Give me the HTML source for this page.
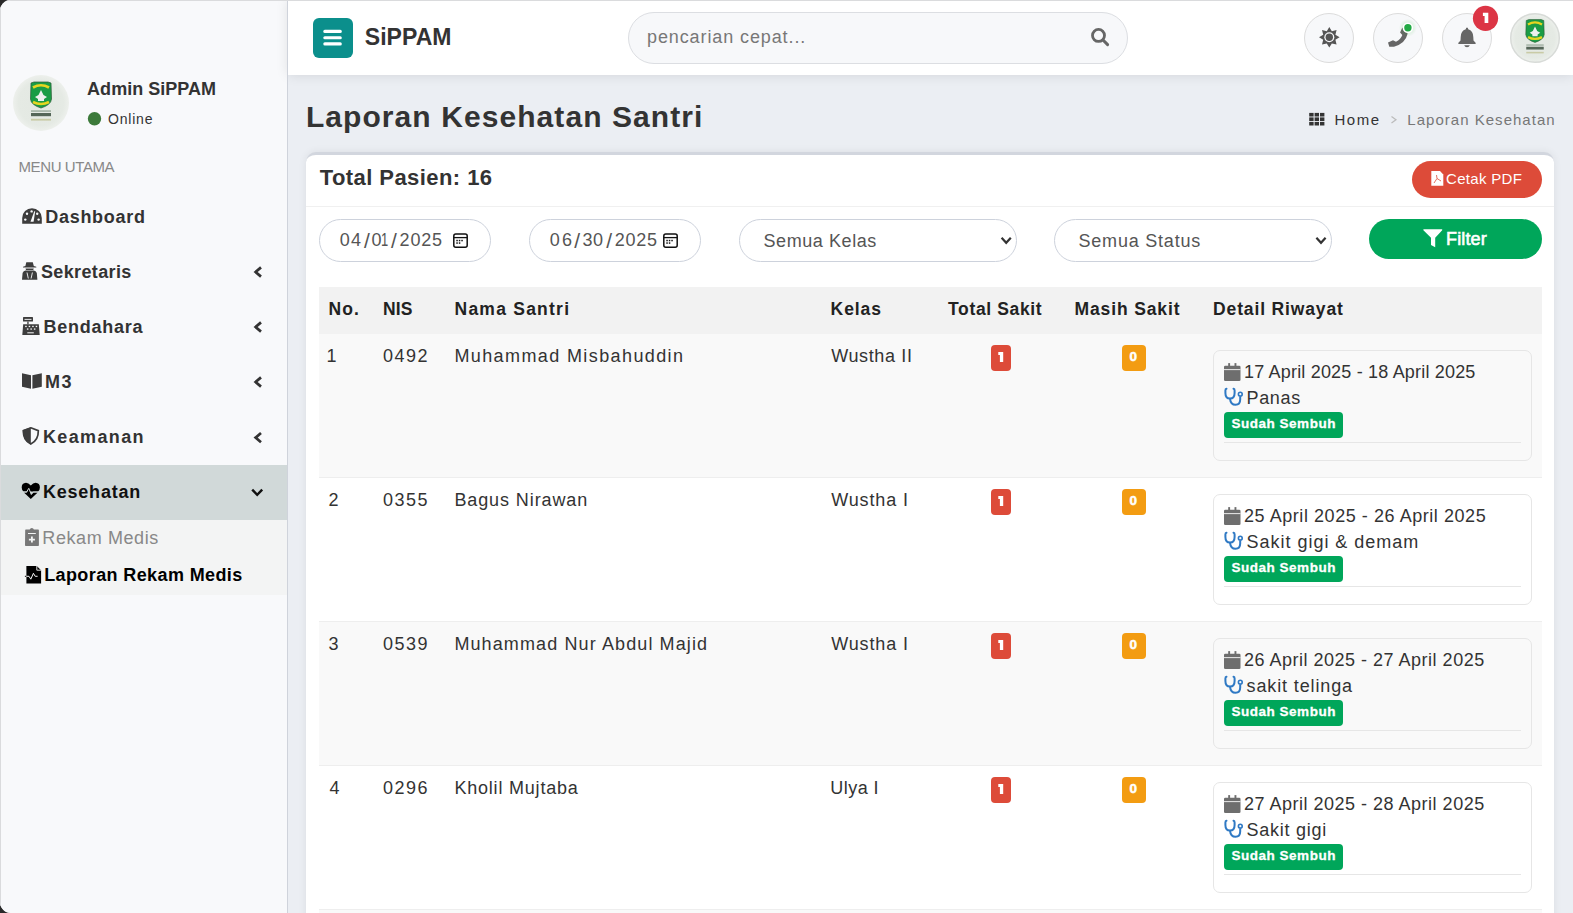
<!DOCTYPE html>
<html><head><meta charset="utf-8"><title>Laporan Kesehatan Santri</title>
<style>
*{box-sizing:border-box;margin:0;padding:0}
html,body{width:1573px;height:913px;overflow:hidden;background:#2a2a2a;font-family:"Liberation Sans",sans-serif;color:#333}
.a{position:absolute}
.t{position:absolute;white-space:nowrap;line-height:1;z-index:20}
#frame{position:absolute;left:0;top:0;width:1573px;height:913px;overflow:hidden;background:#ebeef3;border-top-left-radius:11px;border-bottom-left-radius:11px}
#side{position:absolute;left:0;top:0;width:287px;height:913px;background:#f8f9fb}
#sline{position:absolute;left:287px;top:0;width:1px;height:913px;background:#cfd3db;z-index:3}
#hdr{position:absolute;left:288px;top:0;width:1285px;height:75px;background:#fff;box-shadow:0 0 12px rgba(0,0,0,.11);z-index:2}
.circ{position:absolute;z-index:3;top:13px;width:50px;height:50px;border-radius:50%;background:#f7f8fa;border:1px solid #dcdcdc}
.card{position:absolute;left:306px;top:152px;width:1248px;height:800px;background:#fff;border-radius:10px;border-top:3px solid #d2d6de;box-shadow:0 0 8px rgba(0,0,0,.07)}
.inp{position:absolute;top:219px;height:43px;border:1px solid #cdd2dc;border-radius:22px;background:#fff}
.row{position:absolute;left:319px;width:1223px;height:144px;border-bottom:1px solid #eeeeee}
.det{position:absolute;left:1213px;width:319px;height:111px;border:1px solid #e6e6e6;border-radius:7px}
.badge{position:absolute;height:26px;border-radius:4px}
.ssb{position:absolute;left:1224px;width:119px;height:26px;background:#00a65a;border-radius:4px}
.hr{position:absolute;left:1224px;width:297px;height:1px;background:#e6e6e6}
svg{position:absolute;left:0;top:0;z-index:10}
</style></head><body>
<div id="frame">
<div id="side"></div><div id="sline"></div>
<div class="a" style="left:0;top:465px;width:287px;height:55px;background:#d1d9d9"></div>
<div class="a" style="left:0;top:520px;width:287px;height:75px;background:#f3f4f4"></div>
<div id="hdr"></div>
<div class="a" style="z-index:3;left:313px;top:18px;width:40px;height:40px;border-radius:6px;background:#0b8f8c"></div>
<div class="a" style="z-index:3;left:628px;top:12px;width:500px;height:52px;border-radius:26px;background:#f7f8fa;border:1px solid #dcdee2"></div>
<div class="circ" style="left:1304px"></div>
<div class="circ" style="left:1373px"></div>
<div class="circ" style="left:1442px"></div>
<div class="card"></div>
<div class="a" style="left:1412px;top:161px;width:130px;height:37px;border-radius:19px;background:#dd4b39"></div>
<div class="a" style="left:306px;top:206px;width:1248px;height:1px;background:#f0f0f0"></div>
<div class="inp" style="left:319px;width:172px"></div>
<div class="inp" style="left:529px;width:172px"></div>
<div class="inp" style="left:739px;width:278px"></div>
<div class="inp" style="left:1054px;width:278px"></div>
<div class="a" style="left:1369px;top:219px;width:173px;height:40px;border-radius:20px;background:#00a65a"></div>
<div class="a" style="left:319px;top:287px;width:1223px;height:47px;background:#f2f2f2"></div>
<div class="row" style="top:334px;background:#f9f9f9"></div>
<div class="row" style="top:478px;background:#fff"></div>
<div class="row" style="top:622px;background:#f9f9f9"></div>
<div class="row" style="top:766px;background:#fff"></div>
<div class="row" style="top:910px;background:#f9f9f9"></div>
<div class="badge" style="left:991px;top:345.0px;width:20px;background:#dd4b39"></div>
<div class="badge" style="left:1122px;top:345.0px;width:24px;background:#f39c12"></div>
<div class="det" style="top:350.0px"></div>
<div class="ssb" style="top:412.0px"></div>
<div class="hr" style="top:442.0px"></div>
<div class="badge" style="left:991px;top:489.0px;width:20px;background:#dd4b39"></div>
<div class="badge" style="left:1122px;top:489.0px;width:24px;background:#f39c12"></div>
<div class="det" style="top:494.0px"></div>
<div class="ssb" style="top:556.0px"></div>
<div class="hr" style="top:586.0px"></div>
<div class="badge" style="left:991px;top:633.0px;width:20px;background:#dd4b39"></div>
<div class="badge" style="left:1122px;top:633.0px;width:24px;background:#f39c12"></div>
<div class="det" style="top:638.0px"></div>
<div class="ssb" style="top:700.0px"></div>
<div class="hr" style="top:730.0px"></div>
<div class="badge" style="left:991px;top:777.0px;width:20px;background:#dd4b39"></div>
<div class="badge" style="left:1122px;top:777.0px;width:24px;background:#f39c12"></div>
<div class="det" style="top:782.0px"></div>
<div class="ssb" style="top:844.0px"></div>
<div class="hr" style="top:874.0px"></div>
<div class="a" style="left:0;top:0;width:1573px;height:1px;background:#dadbdd;z-index:40"></div>
<div class="a" style="left:0;top:0;width:1px;height:913px;background:#dadbdd;z-index:40"></div>
<svg width="1573" height="913" viewBox="0 0 1573 913"><defs><radialGradient id="lg"><stop offset="0" stop-color="#e3e8e2"/><stop offset=".8" stop-color="#e5eae4"/><stop offset="1" stop-color="#edf0ec"/></radialGradient><radialGradient id="glow"><stop offset="0" stop-color="#2a2" stop-opacity=".25"/><stop offset="1" stop-color="#2a2" stop-opacity="0"/></radialGradient></defs><rect x="323.3" y="29.8" width="18.5" height="3.1" rx="1.5" fill="#fff"/>
<rect x="323.3" y="36.2" width="18.5" height="3.1" rx="1.5" fill="#fff"/>
<rect x="323.3" y="42.3" width="18.5" height="3.1" rx="1.5" fill="#fff"/>
<circle cx="1098.5" cy="35.4" r="6" stroke="#666" stroke-width="2.8" fill="none"/>
<line x1="1103" y1="40" x2="1107.6" y2="44.6" stroke="#666" stroke-width="3" stroke-linecap="round"/>
<polygon points="1329.30,27.00 1331.83,31.20 1336.58,30.02 1335.40,34.77 1339.60,37.30 1335.40,39.83 1336.58,44.58 1331.83,43.40 1329.30,47.60 1326.77,43.40 1322.02,44.58 1323.20,39.83 1319.00,37.30 1323.20,34.77 1322.02,30.02 1326.77,31.20" fill="#555"/>
<circle cx="1329.3" cy="37.3" r="5.0" fill="#f7f8fa"/>
<circle cx="1329.3" cy="37.3" r="3.7" fill="#555"/>
<path d="M1402.3 27.5 L1406 31 L1407.6 33.8 Q1405.5 43.5 1394 46.7 L1389.3 46.8 L1388 42.4 L1393 40.3 L1396 41.8 Q1400.6 39.5 1402.3 34.9 L1400.1 32.5 Z" fill="#666"/>
<circle cx="1407.9" cy="27.8" r="9" fill="url(#glow)"/>
<circle cx="1407.9" cy="27.8" r="5.3" fill="#fff"/>
<circle cx="1407.9" cy="27.8" r="3.7" fill="#22aa44"/>
<path d="M1467 27.6 Q1468.2 27.6 1468.2 29.2 Q1473.2 30.6 1473.3 37 L1473.5 40.5 L1475.8 43 Q1476 44 1475 44 L1459 44 Q1458 44 1458.2 43 L1460.5 40.5 L1460.7 37 Q1460.8 30.6 1465.8 29.2 Q1465.8 27.6 1467 27.6 Z" fill="#666"/>
<path d="M1464.2 45.2 L1469.8 45.2 Q1469.2 47.3 1467 47.3 Q1464.8 47.3 1464.2 45.2 Z" fill="#666"/>
<circle cx="1485.5" cy="18.3" r="12.6" fill="#dc3545"/>
<path d="M1482.9 12.7 L1488.3 12.7 L1488.3 23 L1484.6 23 L1484.6 15.9 L1482.9 15.9 Z" fill="#fff"/>

<g>
<circle cx="1535" cy="38" r="24.5" fill="url(#lg)"/>
<path d="M1526.25 20.50 L1528.88 19.62 L1541.12 19.62 L1543.75 20.50 L1544.19 34.50 Q1543.75 39.75 1535.00 42.38 Q1526.25 39.75 1525.81 34.50 Z" fill="#1a9c45" stroke="#2d5a35" stroke-width="0.61"/>
<path d="M1528.00 24.44 Q1535.00 20.50 1542.00 24.44" stroke="#e6d521" stroke-width="2.27" fill="none"/>
<path d="M1528.00 37.12 Q1535.00 40.62 1542.00 37.12" stroke="#e6d521" stroke-width="2.27" fill="none"/>
<path d="M1535.00 26.62 L1537.19 31.00 L1540.25 32.75 L1537.62 34.50 L1537.62 36.25 L1532.38 36.25 L1532.38 34.50 L1529.75 32.75 L1532.81 31.00 Z" fill="#eef0ee"/>
<rect x="1526.25" y="44.56" width="17.50" height="0.96" fill="#44604a" opacity=".6"/>
<rect x="1526.25" y="46.75" width="17.50" height="2.80" fill="#263a2a" opacity=".75"/>
<rect x="1526.25" y="51.83" width="17.50" height="1.57" fill="#c9cba6"/>
</g>
<circle cx="1535" cy="38" r="24.3" fill="none" stroke="#d8dbd8" stroke-width="1.5"/>

<g>
<circle cx="41" cy="103" r="28" fill="url(#lg)"/>
<path d="M31.00 83.00 L34.00 82.00 L48.00 82.00 L51.00 83.00 L51.50 99.00 Q51.00 105.00 41.00 108.00 Q31.00 105.00 30.50 99.00 Z" fill="#1a9c45" stroke="#2d5a35" stroke-width="0.70"/>
<path d="M33.00 87.50 Q41.00 83.00 49.00 87.50" stroke="#e6d521" stroke-width="2.60" fill="none"/>
<path d="M33.00 102.00 Q41.00 106.00 49.00 102.00" stroke="#e6d521" stroke-width="2.60" fill="none"/>
<path d="M41.00 90.00 L43.50 95.00 L47.00 97.00 L44.00 99.00 L44.00 101.00 L38.00 101.00 L38.00 99.00 L35.00 97.00 L38.50 95.00 Z" fill="#eef0ee"/>
<rect x="31.00" y="110.50" width="20.00" height="1.10" fill="#44604a" opacity=".6"/>
<rect x="31.00" y="113.00" width="20.00" height="3.20" fill="#263a2a" opacity=".75"/>
<rect x="31.00" y="118.80" width="20.00" height="1.80" fill="#c9cba6"/>
</g>
<circle cx="94.5" cy="118.7" r="6.7" fill="#3c7a3a"/>
<rect x="1309.20" y="112.90" width="4.4" height="3.6" fill="#333"/>
<rect x="1309.20" y="117.40" width="4.4" height="3.6" fill="#333"/>
<rect x="1309.20" y="121.90" width="4.4" height="3.6" fill="#333"/>
<rect x="1314.60" y="112.90" width="4.4" height="3.6" fill="#333"/>
<rect x="1314.60" y="117.40" width="4.4" height="3.6" fill="#333"/>
<rect x="1314.60" y="121.90" width="4.4" height="3.6" fill="#333"/>
<rect x="1320.00" y="112.90" width="4.4" height="3.6" fill="#333"/>
<rect x="1320.00" y="117.40" width="4.4" height="3.6" fill="#333"/>
<rect x="1320.00" y="121.90" width="4.4" height="3.6" fill="#333"/>
<path d="M1391.5 116.5 L1396 119.7 L1391.5 123" stroke="#bbb" stroke-width="1.2" fill="none"/>
<path d="M1431.3 171 L1440 171 L1443.3 174.5 L1443.3 185.7 L1431.3 185.7 Z" fill="#fff"/>
<path d="M1434 183 L1437 178.5 L1436.5 175 M1437 178.5 L1441 181" stroke="#dd4b39" stroke-width="0.8" fill="none"/>
<rect x="453.8" y="233.9" width="13.4" height="13.4" rx="2" stroke="#111" stroke-width="1.5" fill="none"/>
<line x1="453.8" y1="237.6" x2="467.2" y2="237.6" stroke="#111" stroke-width="1.3"/>
<rect x="456.3" y="239.8" width="1.5" height="1.5" fill="#111"/>
<rect x="458.8" y="239.8" width="1.5" height="1.5" fill="#111"/>
<rect x="461.3" y="239.8" width="1.5" height="1.5" fill="#111"/>
<rect x="456.3" y="242.3" width="1.5" height="1.5" fill="#111"/>
<rect x="458.8" y="242.3" width="1.5" height="1.5" fill="#111"/>
<rect x="663.8" y="233.9" width="13.4" height="13.4" rx="2" stroke="#111" stroke-width="1.5" fill="none"/>
<line x1="663.8" y1="237.6" x2="677.2" y2="237.6" stroke="#111" stroke-width="1.3"/>
<rect x="666.3" y="239.8" width="1.5" height="1.5" fill="#111"/>
<rect x="668.8" y="239.8" width="1.5" height="1.5" fill="#111"/>
<rect x="671.3" y="239.8" width="1.5" height="1.5" fill="#111"/>
<rect x="666.3" y="242.3" width="1.5" height="1.5" fill="#111"/>
<rect x="668.8" y="242.3" width="1.5" height="1.5" fill="#111"/>
<path d="M1001.6 237.8 L1006.2 242.8 L1010.8000000000001 237.8" stroke="#333" stroke-width="2.2" fill="none"/>
<path d="M1316.4 237.8 L1321.0 242.8 L1325.6000000000001 237.8" stroke="#333" stroke-width="2.2" fill="none"/>
<path d="M1423.4 229.2 L1442.2 229.2 L1442.2 230.2 L1435.2 237.7 L1435.2 247.2 L1431 245 L1431 237.7 L1423.4 230.2 Z" fill="#fff"/>
<path d="M22.2 223.7 L22.2 218 A9.8 9.8 0 0 1 41.8 218 L41.8 223.7 Z" fill="#3d3d3d"/>
<circle cx="27" cy="213.8" r="1.2" fill="#f8f9fb"/>
<circle cx="31.6" cy="211.4" r="1.2" fill="#f8f9fb"/>
<circle cx="25.3" cy="219.6" r="1.2" fill="#f8f9fb"/>
<circle cx="37.2" cy="213.8" r="1.2" fill="#f8f9fb"/>
<circle cx="38.6" cy="219.6" r="1.2" fill="#f8f9fb"/>
<path d="M30.5 221.8 L33.6 221.8 L35.2 211.2 L34.3 211.2 Z" fill="#f8f9fb"/>
<path d="M26.3 262.2 L32.8 262.2 L33.8 266 L36.3 266.8 L36.3 267.6 L23 267.6 L23 266.8 L25.4 266 Z" fill="#3d3d3d"/>
<path d="M25.5 268.6 L33.8 268.6 L33.2 270 L26 270 Z" fill="#3d3d3d"/>
<path d="M22 279.8 L22.6 273 Q23.4 270.6 25.5 270.4 L33.8 270.4 Q36 270.6 36.8 273 L37.4 279.8 Z" fill="#3d3d3d"/>
<path d="M27 272.5 L28.3 278.5 M32.4 272.5 L31.1 278.5" stroke="#f8f9fb" stroke-width="0.9"/>
<rect x="23" y="317" width="10" height="4.6" rx="0.6" fill="#3d3d3d"/>
<rect x="24.5" y="318.9" width="7" height="0.9" fill="#f8f9fb"/>
<rect x="27.3" y="321.5" width="1.3" height="2.8" fill="#3d3d3d"/>
<path d="M23.2 324.2 L38.8 324.2 L39.7 334.9 L22.3 334.9 Z" fill="#3d3d3d"/>
<rect x="25.2" y="325.8" width="1.5" height="1.3" fill="#f8f9fb"/>
<rect x="28.7" y="325.8" width="1.5" height="1.3" fill="#f8f9fb"/>
<rect x="32.2" y="325.8" width="1.5" height="1.3" fill="#f8f9fb"/>
<rect x="35.7" y="325.8" width="1.5" height="1.3" fill="#f8f9fb"/>
<rect x="26.9" y="328.4" width="1.5" height="1.3" fill="#f8f9fb"/>
<rect x="30.4" y="328.4" width="1.5" height="1.3" fill="#f8f9fb"/>
<rect x="33.9" y="328.4" width="1.5" height="1.3" fill="#f8f9fb"/>
<rect x="27.3" y="332.1" width="6.5" height="1.3" fill="#cfcfcf"/>
<path d="M22 373.3 L31 375.3 L31 388.8 L22 386.7 Z" fill="#3d3d3d"/>
<path d="M32.4 375.3 L41.8 373.3 L41.8 386.7 L32.4 388.8 Z" fill="#3d3d3d"/>
<path d="M30.8 427.8 L38.3 430.7 Q38.6 440 30.8 444 Q23 440 23.4 430.7 Z" stroke="#3d3d3d" stroke-width="1.7" fill="none"/>
<path d="M30.8 427.2 L30.8 444.6 Q22.6 440.5 22.6 430.2 Z" fill="#3d3d3d"/>
<path d="M30.8 485.5 Q28.5 482.8 26 482.8 Q21.7 483 21.7 487.6 Q21.7 490 23.5 491.5 L38.1 491.5 Q39.9 490 39.9 487.6 Q39.9 483 35.6 482.8 Q33.1 482.8 30.8 485.5 Z" fill="#000"/>
<path d="M23.9 492.5 L30.8 499.1 L37.7 492.5 L33.4 492.5 L31.4 494.6 L29 489.2 L26.9 492.5 Z" fill="#000"/>
<path d="M21.7 492 L26.6 492 L28.8 488.3 L31.3 494.5 L33.1 492 L39.9 492" stroke="#d1d9d9" stroke-width="1" fill="none"/>
<path d="M25.2 530.2 Q25.2 529.6 25.8 529.6 L29.7 529.6 Q30.2 528 31.8 528 Q33.4 528 33.9 529.6 L38.2 529.6 Q38.9 529.6 38.9 530.2 L38.9 545.3 Q38.9 546 38.2 546 L25.8 546 Q25 546 25 545.3 Z" fill="#777"/>
<rect x="28" y="533" width="7.8" height="1" fill="#f3f4f4"/>
<path d="M31.9 536.6 L31.9 542.6 M28.9 539.6 L34.9 539.6" stroke="#f3f4f4" stroke-width="1.8"/>
<path d="M26.4 566 L36.8 566 L41.1 570.2 L41.1 583.6 L26.4 583.6 Z" fill="#000"/>
<path d="M36.8 566 L36.8 570.2 L41.1 570.2" stroke="#f3f4f4" stroke-width="0.9" fill="none"/>
<path d="M24.9 576.3 L29 576.3 L30.8 579.2 L33.4 573.3 L35.2 576.3 L37.6 576.3" stroke="#f3f4f4" stroke-width="1" fill="none"/>
<path d="M24.9 576.3 L26.4 576.3" stroke="#000" stroke-width="1" fill="none"/>
<path d="M261 267.4 L255.6 272.0 L261 276.6" stroke="#333" stroke-width="2.7" fill="none"/>
<path d="M261 322.4 L255.6 327.0 L261 331.6" stroke="#333" stroke-width="2.7" fill="none"/>
<path d="M261 377.4 L255.6 382.0 L261 386.6" stroke="#333" stroke-width="2.7" fill="none"/>
<path d="M261 433.0 L255.6 437.6 L261 442.2" stroke="#333" stroke-width="2.7" fill="none"/>
<path d="M252.2 489.6 L257.2 494.8 L262.2 489.6" stroke="#111" stroke-width="2.4" fill="none"/>
<path d="M998.3 352.0 L1003.2 352.0 L1003.2 362.0 L999.9 362.0 L999.9 355.0 L998.3 355.0 Z" fill="#fff"/>
<rect x="1224" y="365.8" width="16.5" height="15.2" rx="1.3" fill="#6e6e6e"/>
<rect x="1224" y="369.2" width="16.5" height="0.9" fill="#f9f9f9"/>
<rect x="1228.2" y="363.1" width="1.9" height="3" fill="#6e6e6e"/>
<rect x="1234.5" y="363.1" width="1.9" height="3" fill="#6e6e6e"/>
<path d="M1226.5 388.8 Q1225.4 389.0 1225.4 390.5 L1225.4 393.0 Q1225.4 398.5 1230 398.6 Q1234.6 398.5 1234.6 393.0 L1234.6 390.5 Q1234.6 389.0 1233.5 388.8" stroke="#2f79c4" stroke-width="2" fill="none" stroke-linecap="round"/>
<path d="M1230 398.6 Q1230.6 404.8 1235.6 404.8 Q1240.2 404.8 1240.2 399.6 L1240.2 396.8" stroke="#2f79c4" stroke-width="2" fill="none"/>
<circle cx="1240.3" cy="394.2" r="1.9" stroke="#2f79c4" stroke-width="1.6" fill="#f9f9f9"/>
<path d="M998.3 496.0 L1003.2 496.0 L1003.2 506.0 L999.9 506.0 L999.9 499.0 L998.3 499.0 Z" fill="#fff"/>
<rect x="1224" y="509.8" width="16.5" height="15.2" rx="1.3" fill="#6e6e6e"/>
<rect x="1224" y="513.2" width="16.5" height="0.9" fill="#f9f9f9"/>
<rect x="1228.2" y="507.1" width="1.9" height="3" fill="#6e6e6e"/>
<rect x="1234.5" y="507.1" width="1.9" height="3" fill="#6e6e6e"/>
<path d="M1226.5 532.8 Q1225.4 533.0 1225.4 534.5 L1225.4 537.0 Q1225.4 542.5 1230 542.6 Q1234.6 542.5 1234.6 537.0 L1234.6 534.5 Q1234.6 533.0 1233.5 532.8" stroke="#2f79c4" stroke-width="2" fill="none" stroke-linecap="round"/>
<path d="M1230 542.6 Q1230.6 548.8 1235.6 548.8 Q1240.2 548.8 1240.2 543.6 L1240.2 540.8" stroke="#2f79c4" stroke-width="2" fill="none"/>
<circle cx="1240.3" cy="538.2" r="1.9" stroke="#2f79c4" stroke-width="1.6" fill="#f9f9f9"/>
<path d="M998.3 640.0 L1003.2 640.0 L1003.2 650.0 L999.9 650.0 L999.9 643.0 L998.3 643.0 Z" fill="#fff"/>
<rect x="1224" y="653.8" width="16.5" height="15.2" rx="1.3" fill="#6e6e6e"/>
<rect x="1224" y="657.2" width="16.5" height="0.9" fill="#f9f9f9"/>
<rect x="1228.2" y="651.1" width="1.9" height="3" fill="#6e6e6e"/>
<rect x="1234.5" y="651.1" width="1.9" height="3" fill="#6e6e6e"/>
<path d="M1226.5 676.8 Q1225.4 677.0 1225.4 678.5 L1225.4 681.0 Q1225.4 686.5 1230 686.6 Q1234.6 686.5 1234.6 681.0 L1234.6 678.5 Q1234.6 677.0 1233.5 676.8" stroke="#2f79c4" stroke-width="2" fill="none" stroke-linecap="round"/>
<path d="M1230 686.6 Q1230.6 692.8 1235.6 692.8 Q1240.2 692.8 1240.2 687.6 L1240.2 684.8" stroke="#2f79c4" stroke-width="2" fill="none"/>
<circle cx="1240.3" cy="682.2" r="1.9" stroke="#2f79c4" stroke-width="1.6" fill="#f9f9f9"/>
<path d="M998.3 784.0 L1003.2 784.0 L1003.2 794.0 L999.9 794.0 L999.9 787.0 L998.3 787.0 Z" fill="#fff"/>
<rect x="1224" y="797.8" width="16.5" height="15.2" rx="1.3" fill="#6e6e6e"/>
<rect x="1224" y="801.2" width="16.5" height="0.9" fill="#f9f9f9"/>
<rect x="1228.2" y="795.1" width="1.9" height="3" fill="#6e6e6e"/>
<rect x="1234.5" y="795.1" width="1.9" height="3" fill="#6e6e6e"/>
<path d="M1226.5 820.8 Q1225.4 821.0 1225.4 822.5 L1225.4 825.0 Q1225.4 830.5 1230 830.6 Q1234.6 830.5 1234.6 825.0 L1234.6 822.5 Q1234.6 821.0 1233.5 820.8" stroke="#2f79c4" stroke-width="2" fill="none" stroke-linecap="round"/>
<path d="M1230 830.6 Q1230.6 836.8 1235.6 836.8 Q1240.2 836.8 1240.2 831.6 L1240.2 828.8" stroke="#2f79c4" stroke-width="2" fill="none"/>
<circle cx="1240.3" cy="826.2" r="1.9" stroke="#2f79c4" stroke-width="1.6" fill="#f9f9f9"/></svg>
<div class="t" style="left:87.10px;top:79.76px;font-size:18px;color:#333;font-weight:bold;letter-spacing:0.027px;">Admin SiPPAM</div>
<div class="t" style="left:108.10px;top:112.05px;font-size:14px;color:#333;letter-spacing:0.780px;">Online</div>
<div class="t" style="left:18.50px;top:159.20px;font-size:15px;color:#888;letter-spacing:-0.400px;">MENU UTAMA</div>
<div class="t" style="left:45.20px;top:207.66px;font-size:18px;color:#333;font-weight:bold;letter-spacing:0.725px;">Dashboard</div>
<div class="t" style="left:41.00px;top:262.76px;font-size:18px;color:#333;font-weight:bold;letter-spacing:0.356px;">Sekretaris</div>
<div class="t" style="left:43.40px;top:317.96px;font-size:18px;color:#333;font-weight:bold;letter-spacing:0.775px;">Bendahara</div>
<div class="t" style="left:45.00px;top:372.66px;font-size:18px;color:#333;font-weight:bold;letter-spacing:1.400px;">M3</div>
<div class="t" style="left:42.90px;top:428.06px;font-size:18px;color:#333;font-weight:bold;letter-spacing:1.371px;">Keamanan</div>
<div class="t" style="left:42.90px;top:482.96px;font-size:18px;color:#111;font-weight:bold;letter-spacing:0.800px;">Kesehatan</div>
<div class="t" style="left:42.30px;top:528.56px;font-size:18px;color:#888;letter-spacing:0.600px;">Rekam Medis</div>
<div class="t" style="left:44.20px;top:565.76px;font-size:18px;color:#000;font-weight:bold;letter-spacing:0.389px;">Laporan Rekam Medis</div>
<div class="t" style="left:364.80px;top:25.63px;font-size:23px;color:#333;font-weight:bold;letter-spacing:0.040px;">SiPPAM</div>
<div class="t" style="left:647.00px;top:27.66px;font-size:18px;color:#777;letter-spacing:0.894px;">pencarian cepat...</div>
<div class="t" style="left:305.90px;top:101.61px;font-size:30px;color:#333;font-weight:bold;letter-spacing:1.074px;">Laporan Kesehatan Santri</div>
<div class="t" style="left:1334.50px;top:112.40px;font-size:15px;color:#333;letter-spacing:1.500px;">Home</div>
<div class="t" style="left:1407.30px;top:112.40px;font-size:15px;color:#777;letter-spacing:1.025px;">Laporan Kesehatan</div>
<div class="t" style="left:319.70px;top:167.08px;font-size:22px;color:#333;font-weight:bold;letter-spacing:0.433px;">Total Pasien: 16</div>
<div class="t" style="left:1446.00px;top:171.00px;font-size:15px;color:#fff;letter-spacing:0.312px;">Cetak PDF</div>
<div class="t" style="left:763.50px;top:231.86px;font-size:18px;color:#555;letter-spacing:0.580px;">Semua Kelas</div>
<div class="t" style="left:1078.50px;top:231.86px;font-size:18px;color:#555;letter-spacing:0.791px;">Semua Status</div>
<div class="t" style="left:1446.00px;top:229.66px;font-size:18px;color:#fff;letter-spacing:0.140px;-webkit-text-stroke:.6px #fff;">Filter</div>
<div class="t" style="left:328.60px;top:301.29px;font-size:17.5px;color:#222;font-weight:bold;letter-spacing:1.050px;">No.</div>
<div class="t" style="left:383.10px;top:301.29px;font-size:17.5px;color:#222;font-weight:bold;letter-spacing:0.050px;">NIS</div>
<div class="t" style="left:454.50px;top:301.29px;font-size:17.5px;color:#222;font-weight:bold;letter-spacing:1.240px;">Nama Santri</div>
<div class="t" style="left:830.60px;top:301.29px;font-size:17.5px;color:#222;font-weight:bold;letter-spacing:0.925px;">Kelas</div>
<div class="t" style="left:948.10px;top:301.29px;font-size:17.5px;color:#222;font-weight:bold;letter-spacing:0.640px;">Total Sakit</div>
<div class="t" style="left:1074.60px;top:301.29px;font-size:17.5px;color:#222;font-weight:bold;letter-spacing:0.860px;">Masih Sakit</div>
<div class="t" style="left:1213.10px;top:301.29px;font-size:17.5px;color:#222;font-weight:bold;letter-spacing:0.854px;">Detail Riwayat</div>
<div class="t" style="left:339.70px;top:230.56px;font-size:18px;color:#555;letter-spacing:1.300px;">04</div>
<div class="t" style="left:363.90px;top:229.52px;font-size:21px;color:#555;">/</div>
<div class="t" style="left:371.60px;top:230.56px;font-size:18px;color:#555;">0</div>
<div class="t" style="left:381.20px;top:230.56px;font-size:18px;color:#555;transform:scaleX(.72);transform-origin:0 0;">1</div>
<div class="t" style="left:391.00px;top:229.52px;font-size:21px;color:#555;">/</div>
<div class="t" style="left:399.60px;top:230.56px;font-size:18px;color:#555;letter-spacing:0.833px;">2025</div>
<div class="t" style="left:549.70px;top:230.56px;font-size:18px;color:#555;letter-spacing:2.300px;">06</div>
<div class="t" style="left:574.30px;top:229.52px;font-size:21px;color:#555;">/</div>
<div class="t" style="left:582.40px;top:230.56px;font-size:18px;color:#555;letter-spacing:0.500px;">30</div>
<div class="t" style="left:606.30px;top:229.52px;font-size:21px;color:#555;">/</div>
<div class="t" style="left:614.80px;top:230.56px;font-size:18px;color:#555;letter-spacing:0.700px;">2025</div>
<div class="t" style="left:326.60px;top:346.96px;font-size:18px;color:#333;">1</div>
<div class="t" style="left:383.00px;top:346.96px;font-size:18px;color:#333;letter-spacing:1.500px;">0492</div>
<div class="t" style="left:454.40px;top:346.96px;font-size:18px;color:#333;letter-spacing:1.395px;">Muhammad Misbahuddin</div>
<div class="t" style="left:831.20px;top:346.96px;font-size:18px;color:#333;letter-spacing:0.625px;">Wustha II</div>
<div class="t" style="left:1244.00px;top:363.46px;font-size:18px;color:#333;letter-spacing:0.186px;">17 April 2025 - 18 April 2025</div>
<div class="t" style="left:1246.60px;top:388.76px;font-size:18px;color:#333;letter-spacing:0.625px;">Panas</div>
<div class="t" style="left:1231.40px;top:417.47px;font-size:13.5px;color:#fff;font-weight:bold;letter-spacing:0.527px;-webkit-text-stroke:.3px #fff;">Sudah Sembuh</div>
<div class="t" style="left:1129.50px;top:350.47px;font-size:13.5px;color:#fff;font-weight:bold;-webkit-text-stroke:.5px #fff;">0</div>
<div class="t" style="left:328.40px;top:490.96px;font-size:18px;color:#333;">2</div>
<div class="t" style="left:383.00px;top:490.96px;font-size:18px;color:#333;letter-spacing:1.500px;">0355</div>
<div class="t" style="left:454.40px;top:490.96px;font-size:18px;color:#333;letter-spacing:0.900px;">Bagus Nirawan</div>
<div class="t" style="left:831.20px;top:490.96px;font-size:18px;color:#333;letter-spacing:0.857px;">Wustha I</div>
<div class="t" style="left:1244.00px;top:507.46px;font-size:18px;color:#333;letter-spacing:0.554px;">25 April 2025 - 26 April 2025</div>
<div class="t" style="left:1246.60px;top:532.76px;font-size:18px;color:#333;letter-spacing:0.976px;">Sakit gigi &amp; demam</div>
<div class="t" style="left:1231.40px;top:561.47px;font-size:13.5px;color:#fff;font-weight:bold;letter-spacing:0.527px;-webkit-text-stroke:.3px #fff;">Sudah Sembuh</div>
<div class="t" style="left:1129.50px;top:494.47px;font-size:13.5px;color:#fff;font-weight:bold;-webkit-text-stroke:.5px #fff;">0</div>
<div class="t" style="left:328.40px;top:634.96px;font-size:18px;color:#333;">3</div>
<div class="t" style="left:383.00px;top:634.96px;font-size:18px;color:#333;letter-spacing:1.500px;">0539</div>
<div class="t" style="left:454.40px;top:634.96px;font-size:18px;color:#333;letter-spacing:1.113px;">Muhammad Nur Abdul Majid</div>
<div class="t" style="left:831.20px;top:634.96px;font-size:18px;color:#333;letter-spacing:0.857px;">Wustha I</div>
<div class="t" style="left:1244.00px;top:651.46px;font-size:18px;color:#333;letter-spacing:0.500px;">26 April 2025 - 27 April 2025</div>
<div class="t" style="left:1246.60px;top:676.76px;font-size:18px;color:#333;letter-spacing:0.867px;">sakit telinga</div>
<div class="t" style="left:1231.40px;top:705.47px;font-size:13.5px;color:#fff;font-weight:bold;letter-spacing:0.527px;-webkit-text-stroke:.3px #fff;">Sudah Sembuh</div>
<div class="t" style="left:1129.50px;top:638.47px;font-size:13.5px;color:#fff;font-weight:bold;-webkit-text-stroke:.5px #fff;">0</div>
<div class="t" style="left:329.40px;top:778.96px;font-size:18px;color:#333;">4</div>
<div class="t" style="left:383.00px;top:778.96px;font-size:18px;color:#333;letter-spacing:1.500px;">0296</div>
<div class="t" style="left:454.40px;top:778.96px;font-size:18px;color:#333;letter-spacing:0.800px;">Kholil Mujtaba</div>
<div class="t" style="left:830.20px;top:778.96px;font-size:18px;color:#333;letter-spacing:0.480px;">Ulya I</div>
<div class="t" style="left:1244.00px;top:795.46px;font-size:18px;color:#333;letter-spacing:0.500px;">27 April 2025 - 28 April 2025</div>
<div class="t" style="left:1246.60px;top:820.76px;font-size:18px;color:#333;letter-spacing:0.733px;">Sakit gigi</div>
<div class="t" style="left:1231.40px;top:849.47px;font-size:13.5px;color:#fff;font-weight:bold;letter-spacing:0.527px;-webkit-text-stroke:.3px #fff;">Sudah Sembuh</div>
<div class="t" style="left:1129.50px;top:782.47px;font-size:13.5px;color:#fff;font-weight:bold;-webkit-text-stroke:.5px #fff;">0</div>
</div>
</body></html>
